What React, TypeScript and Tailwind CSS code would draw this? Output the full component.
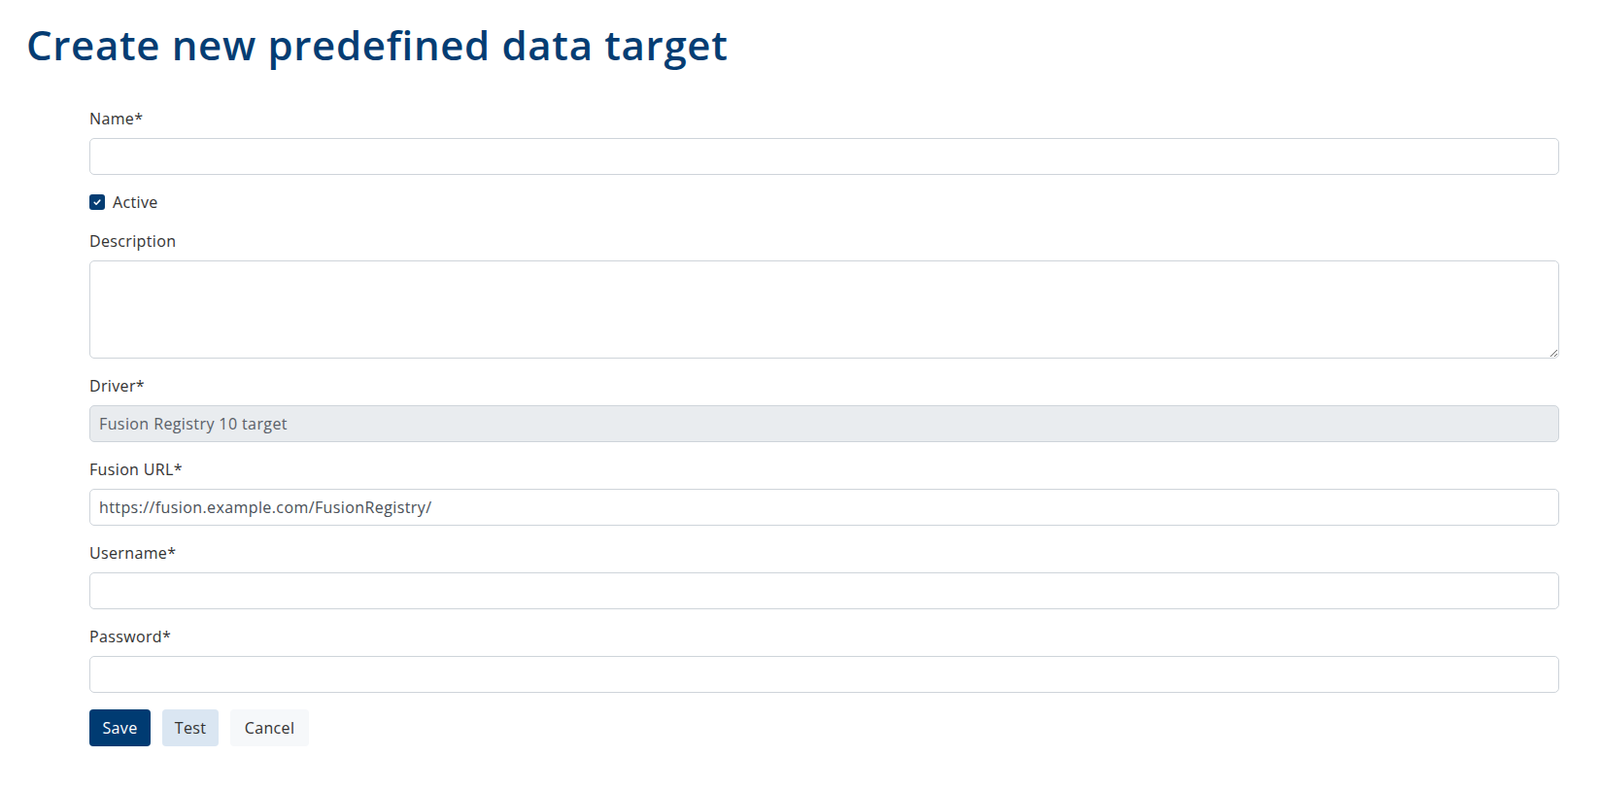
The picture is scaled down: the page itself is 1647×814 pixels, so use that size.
import { useState } from "react";

const inputCls =
  "block h-[38px] w-full rounded-[5px] border border-[#ced4da] bg-white px-[9px] text-[16px] tracking-[0.025em] text-[#495057] outline-none";

function Field({
  label,
  children,
}: {
  label: string;
  children: React.ReactNode;
}) {
  return (
    <div className="mb-4">
      <label className="mb-2 block text-[16px] leading-6 text-[#333]">
        {label}
      </label>
      {children}
    </div>
  );
}

export default function App() {
  const [active, setActive] = useState(true);

  return (
    <div
      className="min-h-screen bg-white tracking-[0.022em] text-[#333]"
      style={{ fontFamily: '"Open Sans", "Noto Sans", Arial, sans-serif' }}
    >
      <h1 className="pl-[27px] pt-[22px] text-[42px] font-semibold leading-[48px] tracking-[0.016em] text-[#053d73]">
        Create new predefined data target
      </h1>

      <form className="pl-[92px] pr-[42px] pt-[40px]">
        <Field label="Name*">
          <input type="text" className={inputCls} />
        </Field>

        {/* Active */}
        <div className="mb-4 flex h-6 items-center gap-[8px]">
          <button
            type="button"
            onClick={() => setActive(!active)}
            className={
              "flex h-4 w-4 items-center justify-center rounded-[3px] " +
              (active ? "bg-[#053d73]" : "border border-[#ced4da] bg-white")
            }
          >
            {active && (
              <svg viewBox="0 0 16 16" className="h-[10px] w-[10px]">
                <path
                  d="M3.5 8.5l3 3 6-6.5"
                  fill="none"
                  stroke="white"
                  strokeWidth="2.4"
                  strokeLinecap="round"
                  strokeLinejoin="round"
                />
              </svg>
            )}
          </button>
          <span className="text-[16px] leading-6 text-[#333]">Active</span>
        </div>

        <Field label="Description">
          <textarea className="block h-[101px] w-full rounded-[5px] border border-[#ced4da] bg-white px-[9px] py-[6px] text-[16px] outline-none" />
        </Field>

        <Field label="Driver*">
          <input
            type="text"
            disabled
            value="Fusion Registry 10 target"
            className={inputCls + " !bg-[#e9ecef] !text-[#5a6068]"}
          />
        </Field>

        <Field label="Fusion URL*">
          <input
            type="text"
            defaultValue="https://fusion.example.com/FusionRegistry/"
            className={inputCls}
          />
        </Field>

        <Field label="Username*">
          <input type="text" className={inputCls} />
        </Field>

        <Field label="Password*">
          <input type="password" className={inputCls} />
        </Field>

        <div className="flex gap-[12px] pt-[1px]">
          <button
            type="button"
            className="h-[38px] w-[63px] rounded-[4px] bg-[#003b72] text-[16px] tracking-[0.022em] text-white"
          >
            Save
          </button>
          <button
            type="button"
            className="h-[38px] w-[58px] rounded-[4px] bg-[#dae6f2] text-[16px] tracking-[0.022em] text-[#333]"
          >
            Test
          </button>
          <button
            type="button"
            className="h-[38px] w-[81px] rounded-[4px] bg-[#f6f8fa] text-[16px] tracking-[0.022em] text-[#333]"
          >
            Cancel
          </button>
        </div>
      </form>
    </div>
  );
}
